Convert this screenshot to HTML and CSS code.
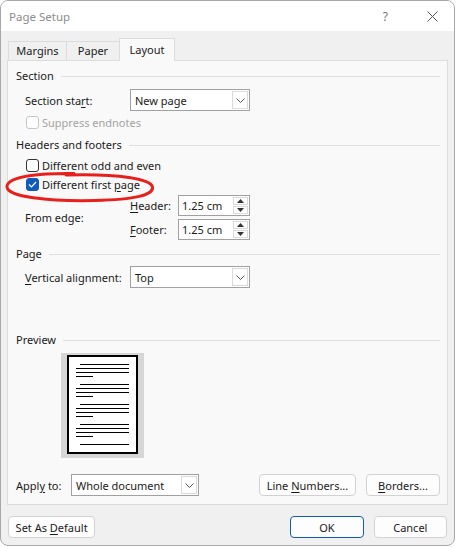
FILE: index.html
```html
<!DOCTYPE html>
<html lang="en">
<head>
  <meta charset="UTF-8">
  <title>Page Setup</title>
  <link rel="stylesheet" href="styles.css">
</head>
<body>
  <div class="window">
    <div class="titlebar">
      <span class="title">Page Setup</span>
      <span class="help">?</span>
      <svg class="close" width="11" height="11" viewBox="0 0 11 11">
        <path d="M0.5 0.5 L10.5 10.5 M10.5 0.5 L0.5 10.5" stroke="#555" stroke-width="1" fill="none"/>
      </svg>
    </div>

    <div class="body">
      <div class="tabs">
        <div class="tab t-margins">Margins</div>
        <div class="tab t-paper">Paper</div>
        <div class="tab t-layout active">Layout</div>
      </div>

      <div class="panel">
        <div class="group-title"><span>Section</span><i></i></div>

        <div class="row indent r-start">
          <span class="lbl w105">Section sta<u>r</u>t:</span>
          <div class="select w119">New page<span class="drop"><svg width="9" height="5" viewBox="0 0 9 5"><path d="M0.5 0.5 L4.5 4.5 L8.5 0.5" stroke="#555" fill="none"/></svg></span></div>
        </div>

        <div class="check-row r-suppress disabled">
          <span class="box"></span><span>Suppress endnotes</span>
        </div>

        <div class="group-title r-hf"><span>Headers and footers</span><i></i></div>

        <div class="check-row r-odd">
          <span class="box"></span><span>Different odd and even</span>
        </div>

        <div class="check-row r-first">
          <span class="box checked"><svg width="9" height="7" viewBox="0 0 9 7"><path d="M1 3.5 L3.5 6 L8 1" stroke="#fff" stroke-width="1.2" fill="none"/></svg></span><span>Different first <u>p</u>age</span>
        </div>

        <div class="edge indent">
          <span class="lbl w105">From edge:</span>
          <div class="edge-fields">
            <div class="spin-row">
              <span class="lbl w48"><u>H</u>eader:</span>
              <div class="spin">
                <span class="val">1.25 cm</span>
                <span class="arrows">
                  <span class="up"><svg width="7" height="4" viewBox="0 0 7 4"><path d="M0 4 L3.5 0 L7 4 Z" fill="#333"/></svg></span>
                  <span class="down"><svg width="7" height="4" viewBox="0 0 7 4"><path d="M0 0 L3.5 4 L7 0 Z" fill="#333"/></svg></span>
                </span>
              </div>
            </div>
            <div class="spin-row">
              <span class="lbl w48"><u>F</u>ooter:</span>
              <div class="spin">
                <span class="val">1.25 cm</span>
                <span class="arrows">
                  <span class="up"><svg width="7" height="4" viewBox="0 0 7 4"><path d="M0 4 L3.5 0 L7 4 Z" fill="#333"/></svg></span>
                  <span class="down"><svg width="7" height="4" viewBox="0 0 7 4"><path d="M0 0 L3.5 4 L7 0 Z" fill="#333"/></svg></span>
                </span>
              </div>
            </div>
          </div>
        </div>

        <div class="group-title r-page"><span>Page</span><i></i></div>

        <div class="row indent r-valign">
          <span class="lbl w105"><u>V</u>ertical alignment:</span>
          <div class="select w119">Top<span class="drop"><svg width="9" height="5" viewBox="0 0 9 5"><path d="M0.5 0.5 L4.5 4.5 L8.5 0.5" stroke="#555" fill="none"/></svg></span></div>
        </div>

        <div class="group-title r-preview"><span>Preview</span><i></i></div>

        <div class="preview">
          <div class="sheet">
            <svg width="71" height="99" viewBox="0 0 71 99">
              <rect x="1" y="1" width="69" height="97" fill="#fff" stroke="#000" stroke-width="2"/>
              <g stroke="#000" stroke-width="1.2">
                <path d="M13 9.5 H62 M9 13.5 H62 M9 17.5 H62 M9 21.5 H26"/>
                <path d="M13 29.5 H62 M9 33.5 H62 M9 37.5 H62 M9 41.5 H26"/>
                <path d="M13 49.5 H62 M9 53.5 H62 M9 57.5 H62 M9 61.5 H26"/>
                <path d="M13 69.5 H62 M9 73.5 H62 M9 77.5 H62 M9 81.5 H26"/>
                <path d="M13 89.5 H62"/>
              </g>
            </svg>
          </div>
        </div>

        <div class="row r-apply">
          <span class="lbl w55">Appl<u>y</u> to:</span>
          <div class="select w127">Whole document<span class="drop"><svg width="9" height="5" viewBox="0 0 9 5"><path d="M0.5 0.5 L4.5 4.5 L8.5 0.5" stroke="#555" fill="none"/></svg></span></div>
          <button class="btn b-lines">Line <u>N</u>umbers...</button>
          <button class="btn b-borders"><u>B</u>orders...</button>
        </div>
      </div>

      <div class="footer">
        <button class="btn b-default">Set As <u>D</u>efault</button>
        <button class="btn b-ok primary">OK</button>
        <button class="btn b-cancel">Cancel</button>
      </div>
    </div>

    <svg class="scribble" width="160" height="40" viewBox="0 165 160 40">
      <path d="M74 173.5 C42 173, 9 176, 7 186 C5 197, 50 201.5, 95 200.5 C135 199.5, 154 195, 152.5 187 C151 179, 120 173.5, 66 175" stroke="#e8201c" stroke-width="3" fill="none" stroke-linecap="round"/>
    </svg>
  </div>
</body>
</html>
```

FILE: styles.css
```css
body {
  margin: 0;
  background: #ffffff;
  font-family: 'Segoe UI', 'Noto Sans', sans-serif;
  font-size: 11px;
  color: #1a1a1a;
}

u {
  text-decoration-thickness: 1px;
  text-underline-offset: 2px;
}

.window {
  position: relative;
  box-sizing: border-box;
  width: 455px;
  height: 546px;
  border: 1px solid #a8a8a8;
  border-radius: 8px;
  background: #f0f0f0;
  overflow: hidden;
}

.titlebar {
  display: flex;
  align-items: center;
  height: 30px;
  background: #ffffff;
  padding-left: 8px;
}

.title {
  color: #8c8c8c;
  font-size: 11.5px;
  flex: 1;
}

.help {
  color: #777;
  font-size: 12px;
  margin-right: 39px;
}

.close {
  margin-right: 16px;
}

.body {
  padding: 7px 7px 0 6px;
}

.tabs {
  display: flex;
  align-items: flex-end;
  height: 22px;
  padding-left: 1px;
  position: relative;
  z-index: 1;
}

.tab {
  box-sizing: border-box;
  height: 19px;
  line-height: 17px;
  text-align: center;
  border: 1px solid #dcdcdc;
  border-bottom: none;
  background: #f0f0f0;
  margin-right: -1px;
}

.t-margins { width: 59px; }
.t-paper { width: 54px; }
.t-layout { width: 56px; }

.tab.active {
  height: 23px;
  line-height: 21px;
  background: #f9f9f9;
  margin-bottom: -1px;
}

.panel {
  box-sizing: border-box;
  width: 441px;
  height: 445px;
  background: #f9f9f9;
  border: 1px solid #dcdcdc;
  padding: 7px 7px 0 8px;
}

.group-title {
  display: flex;
  align-items: center;
  height: 16px;
  line-height: 16px;
}

.group-title i {
  flex: 1;
  height: 1px;
  background: #dedede;
  margin-left: 7px;
}

.r-hf { margin-top: 7px; }
.r-page { margin-top: 6px; }
.r-preview { margin-top: 44px; }

.row {
  display: flex;
  align-items: center;
}

.indent {
  padding-left: 9px;
}

.r-start { margin-top: 5px; }
.r-valign { margin-top: 4px; }
.r-apply { margin-top: 16px; }

.lbl {
  flex: none;
}

.w105 { width: 105px; }
.w48 { width: 48px; }
.w55 { width: 55px; }

.select {
  box-sizing: border-box;
  display: flex;
  align-items: center;
  height: 22px;
  padding-left: 4px;
  border: 1px solid #a0a0a0;
  background: #ffffff;
  position: relative;
}

.w119 { width: 120px; }
.w127 { width: 128px; }

.drop {
  position: absolute;
  right: 1px;
  top: 1px;
  bottom: 1px;
  width: 16px;
  box-sizing: border-box;
  border: 1px solid #dadada;
  display: flex;
  align-items: center;
  justify-content: center;
}

.check-row {
  display: flex;
  align-items: center;
  height: 16px;
  padding-left: 10px;
}

.check-row .box {
  box-sizing: border-box;
  width: 13px;
  height: 13px;
  border: 1px solid #333;
  border-radius: 3px;
  background: #fff;
  margin-right: 3px;
  display: flex;
  align-items: center;
  justify-content: center;
}

.check-row .box.checked {
  background: #0f5cba;
  border-color: #0f5cba;
}

.disabled {
  color: #a3a3a3;
}

.disabled .box {
  border-color: #c6c6c6;
}

.r-suppress { margin-top: 3px; }
.r-odd { margin-top: 4px; }
.r-first { margin-top: 3px; }

.edge {
  display: flex;
  align-items: center;
  margin-top: 3px;
}

.edge-fields {
  display: flex;
  flex-direction: column;
  gap: 3px;
}

.spin-row {
  display: flex;
  align-items: center;
}

.spin {
  box-sizing: border-box;
  display: flex;
  width: 72px;
  height: 21px;
  border: 1px solid #a0a0a0;
  background: #fff;
}

.spin .val {
  flex: 1;
  padding-left: 3px;
  line-height: 19px;
}

.arrows {
  display: flex;
  flex-direction: column;
  width: 15px;
  padding: 1px;
  gap: 1px;
}

.arrows span {
  flex: 1;
  border: 1px solid #dadada;
  display: flex;
  align-items: center;
  justify-content: center;
}

.preview {
  margin-top: 5px;
  margin-left: 45px;
  width: 83px;
  height: 105px;
  background: #d6d6d6;
}

.sheet {
  padding: 2px 0 0 6px;
}

.sheet svg {
  display: block;
}

.btn {
  box-sizing: border-box;
  height: 22px;
  font-family: inherit;
  font-size: 11px;
  color: #1a1a1a;
  background: #fdfdfd;
  border: 1px solid #d2d2d2;
  border-radius: 4px;
  padding: 0;
}

.b-lines { width: 97px; margin-left: 60px; }
.b-borders { width: 74px; margin-left: 10px; }

.footer {
  display: flex;
  margin-top: 11px;
  padding-left: 1px;
}

.b-default { width: 88px; }
.b-ok { width: 74px; margin-left: 195px; }
.b-cancel { width: 74px; margin-left: 10px; }

.primary {
  border-color: #0f5cba;
}

.scribble {
  position: absolute;
  left: -1px;
  top: 164px;
}
```
